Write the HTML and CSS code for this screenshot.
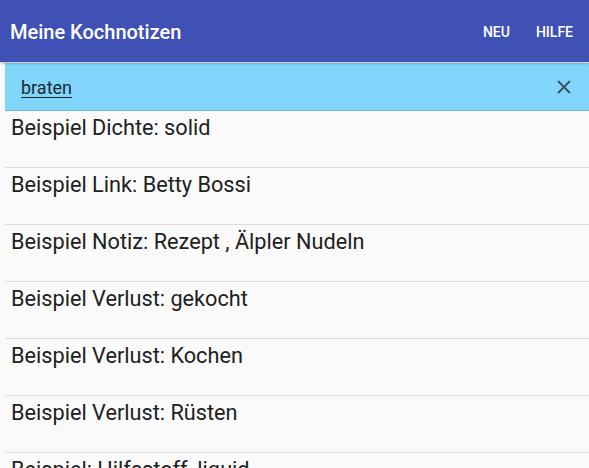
FILE: index.html
```html
<!DOCTYPE html>
<html lang="de">
<head>
<meta charset="utf-8">
<title>Meine Kochnotizen</title>
<link rel="stylesheet" href="styles.css">
</head>
<body>
<header class="appbar">
  <h1 class="title">Meine Kochnotizen</h1>
  <nav class="actions">
    <span class="action">NEU</span>
    <span class="action">HILFE</span>
  </nav>
</header>
<div class="search">
  <span class="query">braten</span>
  <svg class="close" width="16" height="16" viewBox="0 0 16 16"><path d="M2 2L14 14M14 2L2 14" stroke="#3a5563" stroke-width="2" fill="none"/></svg>
</div>
<ul class="list">
  <li class="item">Beispiel Dichte: solid</li>
  <li class="item">Beispiel Link: Betty Bossi</li>
  <li class="item">Beispiel Notiz: Rezept , Älpler Nudeln</li>
  <li class="item">Beispiel Verlust: gekocht</li>
  <li class="item">Beispiel Verlust: Kochen</li>
  <li class="item">Beispiel Verlust: Rüsten</li>
  <li class="item">Beispiel: Hilfsstoff, liquid</li>
</ul>
</body>
</html>
```
FILE: styles.css
```css
html, body {
  margin: 0;
  padding: 0;
  height: 100%;
  overflow: hidden;
}
body {
  background: #fafafa;
  font-family: Roboto, "Noto Sans", sans-serif;
  color: #212121;
}
.appbar {
  height: 62px;
  background: #3f51b5;
  display: flex;
  align-items: center;
  justify-content: space-between;
  padding: 0 16px 0 10px;
  box-shadow: 0 1px 3px rgba(0,0,0,0.3);
  position: relative;
  z-index: 2;
}
.title {
  margin: 0;
  color: #fff;
  font-size: 20px;
  font-weight: 500;
  padding-top: 2px;
}
.actions {
  display: flex;
  gap: 26px;
  padding-top: 2px;
}
.action {
  color: #fff;
  font-size: 14px;
  font-weight: 500;
}
.search {
  margin: 1px 0 0 5px;
  height: 47px;
  background: #81d4fa;
  border-bottom: 1px solid #6cb8dc;
  display: flex;
  align-items: center;
  justify-content: space-between;
  padding: 0 17px 0 16px;
}
.query {
  font-size: 18px;
  color: #1c2a33;
  text-decoration: underline;
  text-underline-offset: 3px;
  padding-top: 2px;
}
.close {
  display: block;
}
.list {
  list-style: none;
  margin: 0;
  padding: 0;
}
.item {
  box-sizing: content-box;
  border-bottom: 1px solid #dcdcdc;
  margin-left: 5px;
  padding-left: 6px;
  font-size: 21.7px;
  line-height: 24px;
  padding-top: 5px;
  height: 51px;
  white-space: nowrap;
}
```
